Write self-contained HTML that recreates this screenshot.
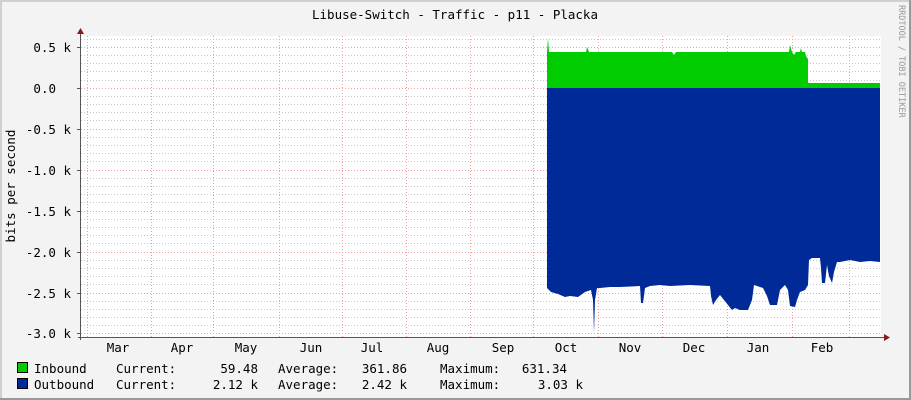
<!DOCTYPE html>
<html><head><meta charset="utf-8"><style>
html,body{margin:0;padding:0;background:#f3f3f3;}
svg{display:block;font-family:"DejaVu Sans Mono","Liberation Mono",monospace;}
</style></head><body>
<svg width="911" height="400" viewBox="0 0 911 400" xmlns="http://www.w3.org/2000/svg">
<rect x="0" y="0" width="911" height="400" fill="#f3f3f3"/>
<rect x="0" y="0" width="911" height="2" fill="#d0d0d0"/>
<rect x="0" y="0" width="2" height="400" fill="#d0d0d0"/>
<rect x="909" y="0" width="2" height="400" fill="#999"/>
<rect x="0" y="398" width="911" height="2" fill="#999"/>
<rect x="81" y="36" width="800" height="301" fill="#fff"/>
<g stroke="#c8c8c8" stroke-width="1" stroke-dasharray="1,2">
<path d="M81 39.5H881M81 55.5H881M81 63.5H881M81 71.5H881M81 80.5H881M81 96.5H881M81 104.5H881M81 112.5H881M81 120.5H881M81 137.5H881M81 145.5H881M81 153.5H881M81 161.5H881M81 178.5H881M81 186.5H881M81 194.5H881M81 202.5H881M81 219.5H881M81 227.5H881M81 235.5H881M81 243.5H881M81 260.5H881M81 268.5H881M81 276.5H881M81 284.5H881M81 301.5H881M81 309.5H881M81 317.5H881M81 325.5H881"/>
</g>
<g stroke="#f0a0a0" stroke-width="1" stroke-dasharray="1,2">
<path d="M81 47.5H881M81 88.5H881M81 129.5H881M81 170.5H881M81 211.5H881M81 252.5H881M81 293.5H881M81 333.5H881"/>
<path d="M87.5 36V337M151.5 36V337M213.5 36V337M279.5 36V337M342.5 36V337M406.5 36V337M470.5 36V337M533.5 36V337M598.5 36V337M662.5 36V337M727.5 36V337M792.5 36V337M849.5 36V337"/>
</g>
<polygon fill="#00cc00" points="547,88 547,52 548,38 549,52 586,52 587,47 589,52 672,52 674,55 676,52 789,52 790,45 792,52 794,55 796,52 800,52 801,48 802,52 805,52 806,56 808,59 808,83 880,83 880,88"/>
<polygon fill="#002a97" points="547,88 880,88 880,262 870,261 860,262 850,260 840,262 837,262 834,272 832,283 829,276 827,265 825,283 822,283 821,268 820,258 812,258 809,260 808,285 805,290 800,292 797,300 795,307 790,306 788,290 785,285 780,290 777,305 770,305 767,296 763,288 757,286 754,285 752,300 748,310 740,310 735,308 732,310 728,305 724,300 720,295 716,300 713,305 711,296 710,286 690,285 670,286 660,285 650,286 645,288 643,303 641,303 640,286 620,287 610,287 600,288 597,288 595,300 594,333 593,300 591,290 585,292 578,297 570,296 565,297 558,294 551,292 547,288"/>
<line x1="80.5" y1="32" x2="80.5" y2="340" stroke="#555" stroke-width="1"/>
<line x1="78" y1="337.5" x2="884" y2="337.5" stroke="#555" stroke-width="1"/>
<polygon points="77,34 84,34 80.5,28" fill="#8b1a1a"/>
<polygon points="884,334 884,341 890,337.5" fill="#8b1a1a"/>
<g stroke="#555" stroke-width="1"><path d="M77 47.5H81M77 88.5H81M77 129.5H81M77 170.5H81M77 211.5H81M77 252.5H81M77 293.5H81M77 333.5H81"/></g>
<g font-size="12.5" fill="#000">
<text x="455" y="19" text-anchor="middle">Libuse-Switch - Traffic - p11 - Placka</text>
<g text-anchor="end">
<text x="71" y="52">0.5 k</text>
<text x="56" y="93">0.0</text>
<text x="71" y="134">-0.5 k</text>
<text x="71" y="175">-1.0 k</text>
<text x="71" y="216">-1.5 k</text>
<text x="71" y="257">-2.0 k</text>
<text x="71" y="298">-2.5 k</text>
<text x="71" y="338">-3.0 k</text>
</g>
<text transform="translate(15,186) rotate(-90)" text-anchor="middle">bits per second</text>
<g text-anchor="middle">
<text x="118" y="352">Mar</text><text x="182" y="352">Apr</text><text x="246" y="352">May</text>
<text x="311" y="352">Jun</text><text x="372" y="352">Jul</text><text x="438" y="352">Aug</text>
<text x="503" y="352">Sep</text><text x="566" y="352">Oct</text><text x="630" y="352">Nov</text>
<text x="694" y="352">Dec</text><text x="758" y="352">Jan</text><text x="822" y="352">Feb</text>
</g>
<rect x="17.5" y="362.5" width="10" height="10" fill="#00cc00" stroke="#000"/>
<rect x="17.5" y="378.5" width="10" height="10" fill="#002a97" stroke="#000"/>
<text x="34" y="373">Inbound</text><text x="116" y="373">Current:</text><text x="258" y="373" text-anchor="end">59.48</text>
<text x="278" y="373">Average:</text><text x="407" y="373" text-anchor="end">361.86</text>
<text x="440" y="373">Maximum:</text><text x="567" y="373" text-anchor="end">631.34</text>
<text x="34" y="389">Outbound</text><text x="116" y="389">Current:</text><text x="258" y="389" text-anchor="end">2.12 k</text>
<text x="278" y="389">Average:</text><text x="407" y="389" text-anchor="end">2.42 k</text>
<text x="440" y="389">Maximum:</text><text x="583" y="389" text-anchor="end">3.03 k</text>
</g>
<text transform="translate(899,5) rotate(90)" font-size="8.5" fill="#999">RRDTOOL / TOBI OETIKER</text>
</svg>
</body></html>
